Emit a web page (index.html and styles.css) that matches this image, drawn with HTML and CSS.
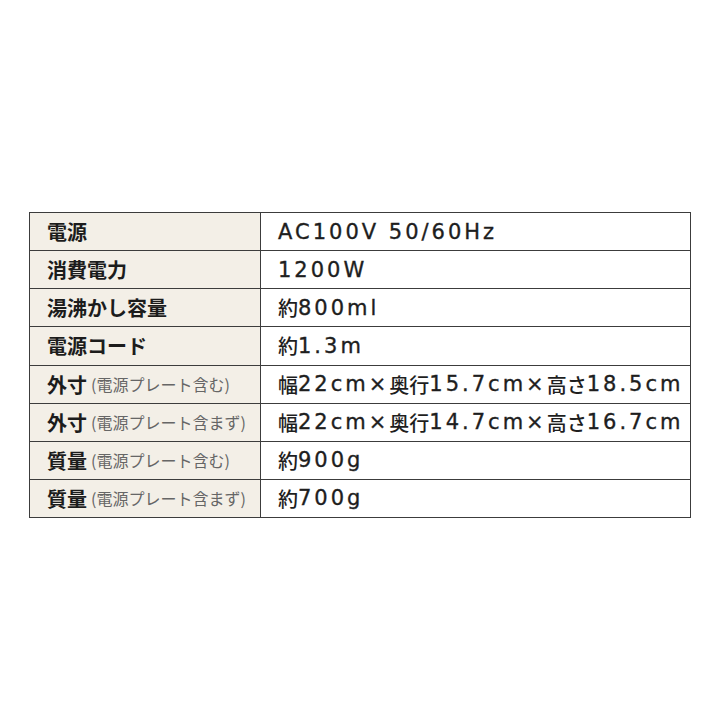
FILE: index.html
```html
<!DOCTYPE html>
<html lang="ja">
<head>
<meta charset="utf-8">
<title>仕様</title>
<link rel="stylesheet" href="styles.css">
</head>
<body>
<div class="page">
  <div class="spec">
    <div class="label">電源</div><div class="value">AC100V 50/60Hz</div>
    <div class="label">消費電力</div><div class="value">1200W</div>
    <div class="label">湯沸かし容量</div><div class="value"><span class="ja">約</span>800ml</div>
    <div class="label">電源コード</div><div class="value"><span class="ja">約</span>1.3m</div>
    <div class="label">外寸<span class="note">(電源プレート含む)</span></div><div class="value"><span class="ja">幅</span>22cm×<span class="ja">奥行</span>15.7cm×<span class="ja">高さ</span>18.5cm</div>
    <div class="label">外寸<span class="note">(電源プレート含まず)</span></div><div class="value"><span class="ja">幅</span>22cm×<span class="ja">奥行</span>14.7cm×<span class="ja">高さ</span>16.7cm</div>
    <div class="label">質量<span class="note">(電源プレート含む)</span></div><div class="value"><span class="ja">約</span>900g</div>
    <div class="label">質量<span class="note">(電源プレート含まず)</span></div><div class="value"><span class="ja">約</span>700g</div>
  </div>
</div>
</body>
</html>
```

FILE: styles.css
```css
html, body {
  margin: 0;
  padding: 0;
  background: #ffffff;
}

.page {
  width: 720px;
  height: 720px;
  box-sizing: border-box;
  padding: 212px 29px 0 29px;
}

.spec {
  display: grid;
  grid-template-columns: 230px 1fr;
  grid-template-rows: repeat(8, 1fr);
  gap: 1px;
  height: 306px;
  padding: 1px;
  box-sizing: border-box;
  background: #3c3c3c;
}

.label,
.value {
  display: flex;
  align-items: center;
  padding-left: 17px;
  white-space: nowrap;
  overflow: hidden;
}

.label {
  background: #f3efe7;
  color: #1c1c1c;
  font-family: "Noto Sans CJK JP", sans-serif;
  font-weight: 700;
  font-size: 20px;
}

.note {
  font-size: 16px;
  font-weight: 400;
  color: #666666;
  margin-left: 4px;
}

.value {
  background: #ffffff;
  color: #1e1e1e;
  font-family: "DejaVu Sans", "Noto Sans CJK JP", sans-serif;
  font-size: 21px;
  letter-spacing: 3px;
  -webkit-text-stroke: 0.35px #1e1e1e;
}

.ja {
  font-family: "Noto Sans CJK JP", sans-serif;
  font-size: 20px;
  font-weight: 500;
  letter-spacing: 0;
  -webkit-text-stroke: 0;
}
```
